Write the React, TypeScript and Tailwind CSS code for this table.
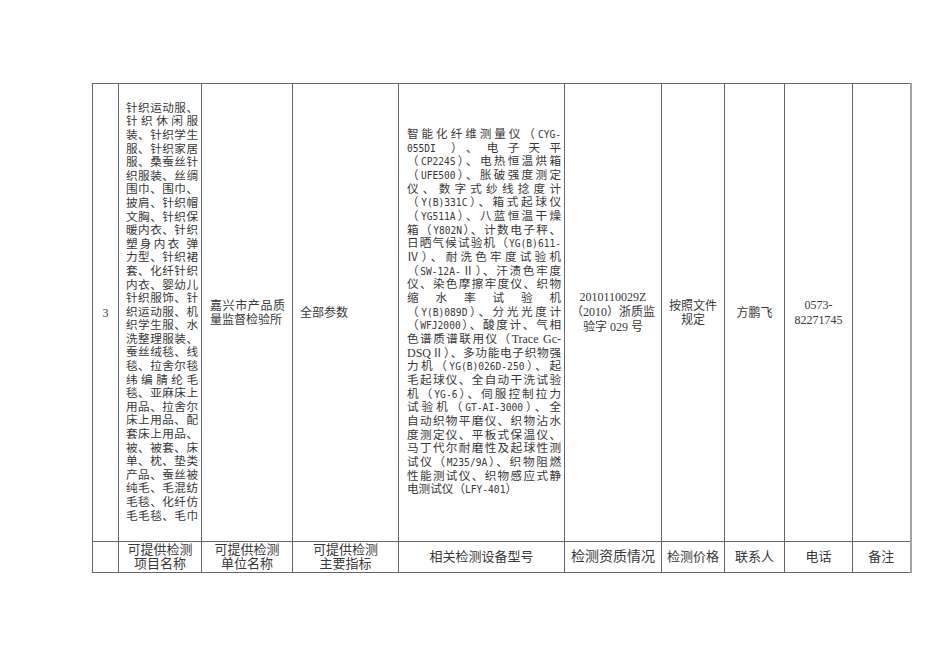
// App.tsx — scanned document table (检测能力一览)
import React from "react"

const itemLines = [
  "针织运动服、", "针织休闲服", "装、针织学生", "服、针织家居", "服、桑蚕丝针",
  "织服装、丝绸", "围巾、围巾、", "披肩、针织帽", "文胸、针织保", "暖内衣、针织",
  "塑身内衣 弹", "力型、针织裙", "套、化纤针织", "内衣、婴幼儿", "针织服饰、针",
  "织运动服、机", "织学生服、水", "洗整理服装、", "蚕丝绒毯、线", "毯、拉舍尔毯",
  "纬编腈纶毛", "毯、亚麻床上", "用品、拉舍尔", "床上用品、配", "套床上用品、",
  "被、被套、床", "单、枕、垫类", "产品、蚕丝被", "纯毛、毛混纺", "毛毯、化纤仿",
  "毛毛毯、毛巾",
]

// [text, latin-in-serif]
const equipLines: [string, boolean][] = [
  ["智能化纤维测量仪（CYG-", false],
  ["055DI ）、电子天平", false],
  ["（CP224S）、电热恒温烘箱", false],
  ["（UFE500）、胀破强度测定", false],
  ["仪、数字式纱线捻度计", false],
  ["（Y(B)331C）、箱式起球仪", false],
  ["（YG511A）、八蓝恒温干燥", false],
  ["箱（Y802N）、计数电子秤、", false],
  ["日晒气候试验机（YG(B)611-", false],
  ["Ⅳ）、耐洗色牢度试验机", false],
  ["（SW-12A-Ⅱ）、汗渍色牢度", false],
  ["仪、染色摩擦牢度仪、织物", false],
  ["缩水率试验机", false],
  ["（Y(B)089D）、分光光度计", false],
  ["（WFJ2000）、酸度计、气相", false],
  ["色谱质谱联用仪（Trace Gc-", true],
  ["DSQⅡ）、多功能电子织物强", true],
  ["力机（YG(B)026D-250）、起", false],
  ["毛起球仪、全自动干洗试验", false],
  ["机（YG-6）、伺服控制拉力", false],
  ["试验机（GT-AI-3000）、全", false],
  ["自动织物平磨仪、织物沾水", false],
  ["度测定仪、平板式保温仪、", false],
  ["马丁代尔耐磨性及起球性测", false],
  ["试仪（M235/9A）、织物阻燃", false],
  ["性能测试仪、织物感应式静", false],
  ["电测试仪（LFY-401）", false],
]

// latin runs: half-width mono (like SimSun) unless serif
function Mixed({ text, serif }: { text: string; serif: boolean }) {
  const parts = text.split(/([ -~]+)/)
  return (
    <>
      {parts.map((p, i) =>
        /^[ -~]+$/.test(p) ? (
          <span
            key={i}
            className={
              serif
                ? "font-['Liberation_Serif'] text-[12px]"
                : "font-['DejaVu_Sans_Mono'] text-[9.6px] whitespace-pre"
            }
          >
            {p}
          </span>
        ) : (
          <span key={i}>{p}</span>
        )
      )}
    </>
  )
}

const cell = "border border-[#666] align-middle p-0"
const last = "border border-[#666] border-r-2 border-r-[#a3a3a3] align-middle p-0"

export default function App() {
  return (
    <div className="min-h-[672px] w-[950px] bg-white pt-[83px] pl-[92px] font-['Liberation_Serif','Noto_Sans_CJK_SC',serif] text-[#383838]">
      <table className="table-fixed border-collapse w-[818px]">
        <colgroup>
          <col className="w-[26px]" />
          <col className="w-[83px]" />
          <col className="w-[91px]" />
          <col className="w-[106px]" />
          <col className="w-[166px]" />
          <col className="w-[97px]" />
          <col className="w-[63px]" />
          <col className="w-[60px]" />
          <col className="w-[68px]" />
          <col className="w-[58px]" />
        </colgroup>
        <tbody>
          <tr className="h-[458px]">
            <td className={`${cell} text-center text-[12px]`}>3</td>

            {/* 项目名称 */}
            <td className={`${cell} pl-[7px] pr-[3px]`}>
              <div className="text-[11.6px] leading-[13.6px]">
                {itemLines.map((l, i) => (
                  <div key={i} className="whitespace-nowrap text-justify [text-align-last:justify]">
                    {l}
                  </div>
                ))}
              </div>
            </td>

            {/* 单位名称 */}
            <td className={`${cell} pl-[8px] pr-[7px]`}>
              <div className="text-[12px] leading-[14px]">
                <div className="whitespace-nowrap text-justify [text-align-last:justify]">嘉兴市产品质</div>
                <div className="whitespace-nowrap">量监督检验所</div>
              </div>
            </td>

            {/* 主要指标 */}
            <td className={`${cell} pl-[7px] text-[12px]`}>全部参数</td>

            {/* 设备型号 */}
            <td className={`${cell} pl-[8px] pr-[3px]`}>
              <div className="text-[11.6px] leading-[13.65px]">
                {equipLines.map(([l, serif], i) => (
                  <div
                    key={i}
                    className={
                      i === equipLines.length - 1
                        ? "whitespace-nowrap"
                        : "whitespace-nowrap text-justify [text-align-last:justify]"
                    }
                  >
                    <Mixed text={l} serif={serif} />
                  </div>
                ))}
              </div>
            </td>

            {/* 资质情况 */}
            <td className={`${cell} text-center text-[12px] leading-[15px]`}>
              <div>2010110029Z</div>
              <div>（2010）浙质监</div>
              <div>验字 029 号</div>
            </td>

            <td className={`${cell} text-center text-[12px] leading-[14px]`}>
              <div>按照文件</div>
              <div>规定</div>
            </td>

            <td className={`${cell} text-center text-[12px]`}>方鹏飞</td>

            <td className={`${cell} text-center text-[12px] leading-[15px]`}>
              <div>0573-</div>
              <div>82271745</div>
            </td>

            <td className={last}></td>
          </tr>

          <tr className="h-[31px] text-[13px] leading-[14px]">
            <td className={cell}></td>
            <td className={`${cell} text-center`}>
              <div>可提供检测</div>
              <div>项目名称</div>
            </td>
            <td className={`${cell} text-center`}>
              <div>可提供检测</div>
              <div>单位名称</div>
            </td>
            <td className={`${cell} text-center`}>
              <div>可提供检测</div>
              <div>主要指标</div>
            </td>
            <td className={`${cell} text-center`}>相关检测设备型号</td>
            <td className={`${cell} text-center text-[14px]`}>检测资质情况</td>
            <td className={`${cell} text-center`}>检测价格</td>
            <td className={`${cell} text-center`}>联系人</td>
            <td className={`${cell} text-center`}>电话</td>
            <td className={`${last} text-center`}>备注</td>
          </tr>
        </tbody>
      </table>
    </div>
  )
}
